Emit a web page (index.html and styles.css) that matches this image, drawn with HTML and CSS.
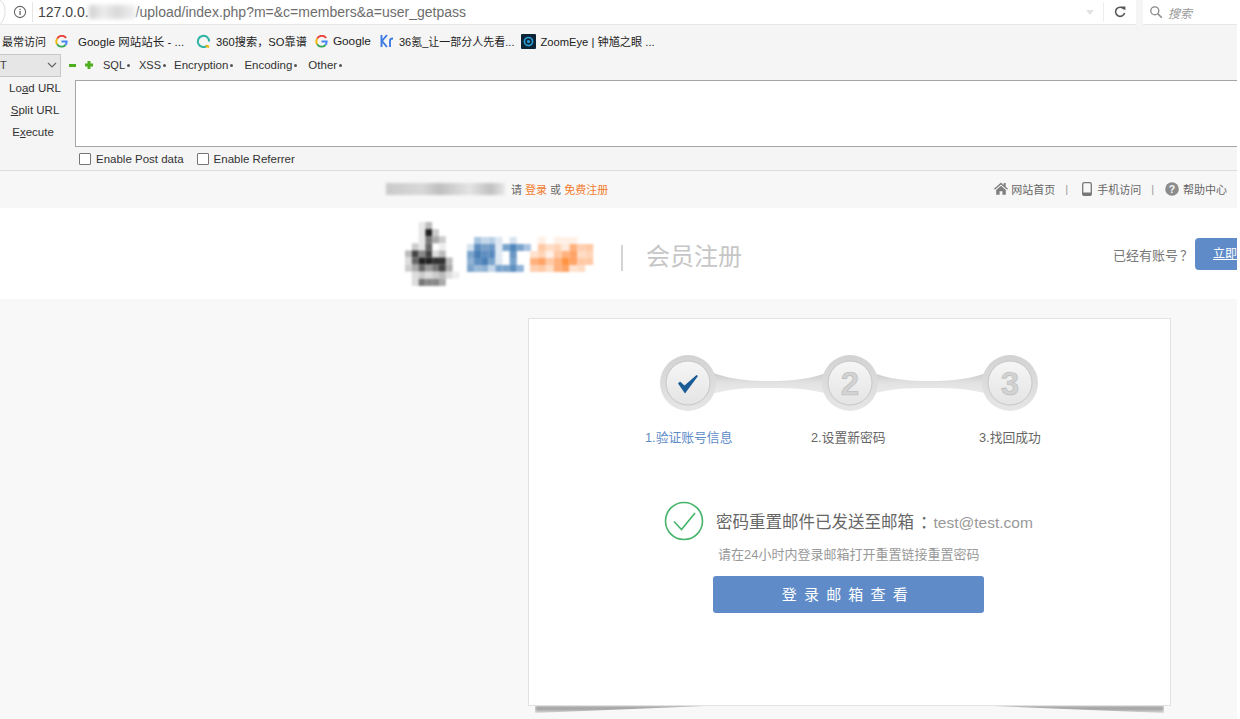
FILE: index.html
```html
<!DOCTYPE html>
<html lang="zh">
<head>
<meta charset="utf-8">
<title>会员注册</title>
<link rel="stylesheet" href="styles.css">
</head>
<body>
<div class="shot">
  <div class="urlbar">
    <div class="url-main">
      <svg class="back-arc" width="6" height="25" viewBox="0 0 6 25"><path d="M0 0Q6 5 5 14Q4 20 0 25" fill="none" stroke="#dedede"/></svg>
      <svg class="info" width="14" height="14" viewBox="0 0 14 14"><circle cx="7" cy="7" r="5.6" fill="none" stroke="#666" stroke-width="1.1"/><rect x="6.4" y="6" width="1.3" height="4" fill="#666"/><rect x="6.4" y="3.8" width="1.3" height="1.3" fill="#666"/></svg>
      <span class="url-sep"></span>
      <span class="url-text"><span class="url-host">127.0.0.</span><span class="url-blur"></span>/upload/index.php?m=&amp;c=members&amp;a=user_getpass</span>
      <span class="url-drop"></span>
      <span class="url-sep2"></span>
      <svg class="reload" width="14" height="14" viewBox="0 0 14 14"><path d="M11 4.2A4.6 4.6 0 1 0 11.6 8" fill="none" stroke="#555" stroke-width="1.5"/><path d="M8 1.5h4.4v4z" fill="#555"/></svg>
    </div>
    <div class="url-search">
      <svg width="14" height="14" viewBox="0 0 14 14"><circle cx="5.8" cy="5.8" r="4" fill="none" stroke="#888" stroke-width="1.3"/><path d="M8.8 8.8l4 4" stroke="#888" stroke-width="1.6"/></svg>
      <em>搜索</em>
    </div>
  </div>

  <div class="bookmarks">
    <span class="bm bm-first">最常访问</span>
    <span class="bm bm-site"><svg width="13" height="13" viewBox="0 0 14 14"><path d="M12 3.2A5.6 5.6 0 0 0 2.3 4" fill="none" stroke="#e8453c" stroke-width="2"/><path d="M2.3 4a5.6 5.6 0 0 0 0 6" fill="none" stroke="#f4b400" stroke-width="2"/><path d="M2.3 10a5.6 5.6 0 0 0 9 .6" fill="none" stroke="#34a853" stroke-width="2"/><path d="M7 7h5.6a5.6 5.6 0 0 1-1.3 3.6" fill="none" stroke="#4285f4" stroke-width="2"/></svg>Google 网站站长 - ...</span>
    <span class="bm bm-so"><svg width="15" height="15" viewBox="0 0 16 16"><path d="M12.2 12.2A6 6 0 1 1 14 8" fill="none" stroke="#2fb3a5" stroke-width="2.2"/><path d="M10.5 12.5l3.500 1.200" stroke="#f4b400" stroke-width="2.4"/></svg>360搜索，SO靠谱</span>
    <span class="bm bm-google"><svg width="13" height="13" viewBox="0 0 14 14"><path d="M12 3.2A5.6 5.6 0 0 0 2.3 4" fill="none" stroke="#e8453c" stroke-width="2"/><path d="M2.3 4a5.6 5.6 0 0 0 0 6" fill="none" stroke="#f4b400" stroke-width="2"/><path d="M2.3 10a5.6 5.6 0 0 0 9 .6" fill="none" stroke="#34a853" stroke-width="2"/><path d="M7 7h5.6a5.6 5.6 0 0 1-1.3 3.6" fill="none" stroke="#4285f4" stroke-width="2"/></svg>Google</span>
    <span class="bm bm-kr"><svg width="14" height="14" viewBox="0 0 14 14"><path d="M1.500 1v12M7 1L2 7l5 6M10 13V6.500q0-2 3-2" fill="none" stroke="#3d7be0" stroke-width="1.900"/></svg>36氪_让一部分人先看...</span>
    <span class="bm bm-ze"><svg width="15" height="15" viewBox="0 0 14 14"><rect width="14" height="14" rx="1" fill="#0c2436"/><circle cx="7" cy="7" r="3.800" fill="none" stroke="#2c9fd8" stroke-width="1.500"/><circle cx="7" cy="7" r="1.500" fill="#2c9fd8"/></svg>ZoomEye | 钟馗之眼 ...</span>
  </div>

  <div class="hackbar">
    <div class="hb-tools">
      <div class="hb-select">T<svg width="10" height="6" viewBox="0 0 10 6"><path d="M1 1l4 4 4-4" fill="none" stroke="#666" stroke-width="1.200"/></svg></div>
      <span class="hb-minus"></span>
      <svg class="hb-plus" width="8" height="8" viewBox="0 0 8 8"><path d="M2.500 0h3v2.500H8v3H5.500V8h-3V5.500H0v-3h2.500z" fill="#4fae20"/></svg>
      <span class="hb-menu hb-sql">SQL</span>
      <span class="hb-menu hb-xss">XSS</span>
      <span class="hb-menu hb-enc">Encryption</span>
      <span class="hb-menu hb-cod">Encoding</span>
      <span class="hb-menu">Other</span>
    </div>
    <div class="hb-body">
      <div class="hb-actions">
        <span>Lo<u>a</u>d URL</span>
        <span><u>S</u>plit URL</span>
        <span class="hb-exec">E<u>x</u>ecute</span>
      </div>
      <div class="hb-area"></div>
    </div>
    <div class="hb-checks">
      <label><i class="box"></i>Enable Post data</label>
      <label><i class="box"></i>Enable Referrer</label>
    </div>
  </div>

  <div class="site-top">
    <div class="login-tip">
      <span class="tip-blur"></span>
      <span>请 <b>登录</b> 或 <b>免费注册</b></span>
    </div>
    <div class="top-links">
      <span class="tl"><svg width="14" height="13" viewBox="0 0 14 13"><path d="M7 .5L0 6.800l.9 1L7 2.400l6.100 5.400.9-1-2.300-2V1h-2v2z" fill="#808080"/><path d="M2.200 8L7 3.800 11.800 8v4.800H8.400V9.200H5.600v3.600H2.200z" fill="#808080"/></svg>网站首页</span>
      <span class="tl-sep tl-sep-a">|</span>
      <span class="tl tl-phone"><svg width="10" height="14" viewBox="0 0 10 14"><rect x=".7" y=".7" width="8.600" height="12.600" rx="1.400" fill="none" stroke="#777" stroke-width="1.300"/><rect x=".7" y="10.500" width="8.600" height="2.800" fill="#777"/></svg>手机访问</span>
      <span class="tl-sep tl-sep-b">|</span>
      <span class="tl tl-help"><svg width="14" height="14" viewBox="0 0 14 14"><circle cx="7" cy="7" r="6.800" fill="#8c8c8c"/><text x="7" y="10.800" text-anchor="middle" font-size="10.500" font-weight="700" font-family="Liberation Sans" fill="#f7f7f7">?</text></svg>帮助中心</span>
    </div>
  </div>

  <header class="site-head">
    <svg class="logo" width="190" height="66" viewBox="0 0 190 66" aria-hidden="true">
      <g transform="scale(6.800 7.100)">
        <rect x="2" y="0" width="1" height="3" fill="#e8e8e8"/><rect x="3" y="0" width="1" height="1" fill="#bbb"/>
        <rect x="3" y="1" width="1" height="1" fill="#222"/><rect x="4" y="1" width="1" height="1" fill="#ccc"/>
        <rect x="3" y="2" width="1" height="1" fill="#777"/><rect x="4" y="2" width="1" height="1" fill="#aaa"/><rect x="5" y="2" width="1" height="1" fill="#ccc"/>
        <rect x="1" y="3" width="1" height="1" fill="#ccc"/><rect x="2" y="3" width="1" height="1" fill="#e5e5e5"/><rect x="3" y="3" width="1" height="1" fill="#666"/><rect x="5" y="3" width="1" height="1" fill="#eee"/>
        <rect x="0" y="4" width="1" height="1" fill="#bbb"/><rect x="1" y="4" width="1" height="1" fill="#444"/><rect x="2" y="4" width="1" height="1" fill="#888"/><rect x="3" y="4" width="1" height="1" fill="#444"/><rect x="4" y="4" width="1" height="1" fill="#ddd"/><rect x="5" y="4" width="1" height="1" fill="#bbb"/>
        <rect x="0" y="5" width="1" height="1" fill="#ddd"/><rect x="1" y="5" width="1" height="1" fill="#666"/><rect x="2" y="5" width="1" height="1" fill="#222"/><rect x="3" y="5" width="1" height="1" fill="#222"/><rect x="4" y="5" width="1" height="1" fill="#333"/><rect x="5" y="5" width="1" height="1" fill="#333"/><rect x="6" y="5" width="1" height="1" fill="#bbb"/>
        <rect x="0" y="6" width="1" height="1" fill="#ccc"/><rect x="1" y="6" width="1" height="1" fill="#aaa"/><rect x="2" y="6" width="1" height="1" fill="#666"/><rect x="3" y="6" width="1" height="1" fill="#999"/><rect x="4" y="6" width="1" height="1" fill="#777"/><rect x="5" y="6" width="1" height="1" fill="#444"/><rect x="6" y="6" width="1" height="1" fill="#aaa"/>
        <rect x="1" y="7" width="1" height="1" fill="#ddd"/><rect x="2" y="7" width="1" height="1" fill="#ccc"/><rect x="3" y="7" width="1" height="1" fill="#ddd"/><rect x="4" y="7" width="1" height="1" fill="#ccc"/><rect x="5" y="7" width="1" height="1" fill="#bbb"/><rect x="6" y="7" width="1" height="1" fill="#ddd"/><rect x="7" y="7" width="1" height="1" fill="#eee"/>
        <rect x="1" y="8" width="1" height="1" fill="#ddd"/><rect x="2" y="8" width="1" height="1" fill="#777"/><rect x="3" y="8" width="1" height="1" fill="#888"/><rect x="4" y="8" width="1" height="1" fill="#888"/><rect x="5" y="8" width="1" height="1" fill="#aaa"/>
      </g>
      <g transform="translate(62 15) scale(7.100 7)">
        <rect x="1" y="0" width="1" height="1" fill="#a8c4e0"/><rect x="2" y="0" width="1" height="1" fill="#c5d8ea"/><rect x="3" y="0" width="1" height="1" fill="#b8cfe6"/><rect x="4" y="0" width="1" height="1" fill="#dce7f2"/><rect x="6" y="0" width="1" height="1" fill="#d5e2f0"/>
        <rect x="0" y="1" width="1" height="1" fill="#d4e2f0"/><rect x="1" y="1" width="1" height="1" fill="#5f8fc0"/><rect x="2" y="1" width="1" height="1" fill="#7aa0c8"/><rect x="3" y="1" width="1" height="1" fill="#6a97c4"/><rect x="4" y="1" width="1" height="1" fill="#e0eaf4"/><rect x="5" y="1" width="1" height="1" fill="#7aa3cc"/><rect x="6" y="1" width="1" height="1" fill="#4f86bb"/><rect x="7" y="1" width="1" height="1" fill="#7aa3cc"/><rect x="8" y="1" width="1" height="1" fill="#a8c4e0"/>
        <rect x="0" y="2" width="1" height="1" fill="#7da5cc"/><rect x="1" y="2" width="1" height="1" fill="#4a80b6"/><rect x="2" y="2" width="1" height="1" fill="#5f8fc0"/><rect x="3" y="2" width="1" height="1" fill="#5a8bbf"/><rect x="4" y="2" width="1" height="1" fill="#e0eaf4"/><rect x="6" y="2" width="1" height="1" fill="#6a97c4"/>
        <rect x="0" y="3" width="1" height="1" fill="#90b2d4"/><rect x="1" y="3" width="1" height="1" fill="#5f8fc0"/><rect x="2" y="3" width="1" height="1" fill="#4a80b6"/><rect x="3" y="3" width="1" height="1" fill="#7aa3cc"/><rect x="4" y="3" width="1" height="1" fill="#dce7f2"/><rect x="6" y="3" width="1" height="1" fill="#7aa3cc"/>
        <rect x="0" y="4" width="1" height="1" fill="#7da5cc"/><rect x="1" y="4" width="1" height="1" fill="#9abad9"/><rect x="2" y="4" width="1" height="1" fill="#90b2d4"/><rect x="3" y="4" width="1" height="1" fill="#c5d8ea"/><rect x="4" y="4" width="1" height="1" fill="#7aa3cc"/><rect x="5" y="4" width="1" height="1" fill="#7aa3cc"/><rect x="6" y="4" width="1" height="1" fill="#5f8fc0"/><rect x="7" y="4" width="1" height="1" fill="#8fb2d6"/>
      </g>
      <g transform="translate(125 15) scale(7.900 7)">
        <rect x="1" y="0" width="1" height="1" fill="#fff0e6"/><rect x="3" y="0" width="3" height="1" fill="#fff0e6"/>
        <rect x="1" y="1" width="1" height="1" fill="#ffc9a5"/><rect x="2" y="1" width="1" height="1" fill="#ffdcc4"/><rect x="3" y="1" width="1" height="1" fill="#ffd4b8"/><rect x="4" y="1" width="1" height="1" fill="#ffeadd"/><rect x="5" y="1" width="1" height="1" fill="#ffb27d"/><rect x="6" y="1" width="1" height="1" fill="#ffcfb0"/><rect x="7" y="1" width="1" height="1" fill="#ffc9a5"/>
        <rect x="0" y="2" width="1" height="1" fill="#ffe2cf"/><rect x="1" y="2" width="1" height="1" fill="#ffd4b8"/><rect x="2" y="2" width="1" height="1" fill="#fff0e6"/><rect x="3" y="2" width="1" height="1" fill="#ffc9a5"/><rect x="4" y="2" width="1" height="1" fill="#ffb27d"/><rect x="5" y="2" width="1" height="1" fill="#ffa366"/><rect x="6" y="2" width="1" height="1" fill="#ffdcc4"/><rect x="7" y="2" width="1" height="1" fill="#ffd4b8"/>
        <rect x="0" y="3" width="1" height="1" fill="#ffb27d"/><rect x="1" y="3" width="1" height="1" fill="#ffa366"/><rect x="2" y="3" width="1" height="1" fill="#ffc9a5"/><rect x="3" y="3" width="1" height="1" fill="#ffb27d"/><rect x="4" y="3" width="1" height="1" fill="#ff9540"/><rect x="5" y="3" width="1" height="1" fill="#ffa366"/><rect x="6" y="3" width="1" height="1" fill="#ffc9a5"/><rect x="7" y="3" width="1" height="1" fill="#ffc9a5"/>
        <rect x="0" y="4" width="1" height="1" fill="#ffcfb0"/><rect x="1" y="4" width="1" height="1" fill="#ffc9a5"/><rect x="2" y="4" width="1" height="1" fill="#ffdcc4"/><rect x="3" y="4" width="1" height="1" fill="#ffb27d"/><rect x="4" y="4" width="1" height="1" fill="#ffa366"/><rect x="5" y="4" width="1" height="1" fill="#ffe2cf"/><rect x="6" y="4" width="1" height="1" fill="#ffdcc4"/>
      </g>
    </svg>
    <span class="head-sep"></span>
    <span class="head-title">会员注册</span>
    <div class="head-login">
      <span>已经有账号<span class="qmark">？</span></span>
      <a class="login-btn">立即</a>
    </div>
  </header>

  <main class="page">
    <section class="card">
      <div class="steps">
        <svg class="step-art" width="380" height="58" viewBox="0 0 380 58">
          <defs>
            <linearGradient id="disc" x1="0" y1="0" x2="0" y2="1"><stop offset="0" stop-color="#f6f6f6"/><stop offset="1" stop-color="#e4e4e4"/></linearGradient>
            <linearGradient id="ring" x1="0" y1="0" x2="0" y2="1"><stop offset="0" stop-color="#d2d2d2"/><stop offset="1" stop-color="#e6e6e6"/></linearGradient>
            <linearGradient id="band" x1="0" y1="0" x2="0" y2="1"><stop offset="0" stop-color="#c4c4c4"/><stop offset=".5" stop-color="#e2e2e2"/><stop offset="1" stop-color="#ececec"/></linearGradient>
          </defs>
          <path d="M45 15C70 25 90 26 109 26S150 25 175 15V41C150 33 130 33 109 33S70 33 45 41Z" fill="url(#band)"/>
          <path d="M205 15C230 25 250 26 269 26S310 25 335 15V41C310 33 290 33 269 33S230 33 205 41Z" fill="url(#band)"/>
          <g fill="url(#ring)">
            <circle cx="28" cy="28" r="28"/>
            <circle cx="190" cy="28" r="28"/>
            <circle cx="350" cy="28" r="28"/>
          </g>
          <g fill="url(#disc)" stroke="#c6c6c6" stroke-width="1">
            <circle cx="28" cy="28" r="22"/>
            <circle cx="190" cy="28" r="22"/>
            <circle cx="350" cy="28" r="22"/>
          </g>
          <path d="M18 28.500l2-2 4.500 4L36.500 20l1.500 1L25 38.500z" fill="#1c5c96"/>
          <text class="step-num" x="190" y="40">2</text>
          <text class="step-num" x="350" y="40">3</text>
        </svg>
        <div class="step-labels">
          <span class="active">1.验证账号信息</span>
          <span>2.设置新密码</span>
          <span>3.找回成功</span>
        </div>
      </div>
      <div class="result">
        <div class="result-line">
          <svg width="40" height="40" viewBox="0 0 40 40"><circle cx="20" cy="20" r="18.500" fill="none" stroke="#45b46a" stroke-width="1.600"/><path d="M10 20.500l7.500 8L31 12" fill="none" stroke="#45b46a" stroke-width="1.600"/></svg>
          <span class="result-main">密码重置邮件已发送至邮箱<span class="colon">：</span><span class="mail">test@test.com</span></span>
        </div>
        <p class="result-sub">请在24小时内登录邮箱打开重置链接重置密码</p>
        <a class="mail-btn">登 录 邮 箱 查 看</a>
      </div>
    </section>
  </main>
</div>
</body>
</html>
```
FILE: styles.css
```css
* { box-sizing: border-box; }
html, body { margin: 0; height: 719px; overflow: hidden; background: #fff; }
body { font-family: "Liberation Sans", "Noto Sans CJK SC", sans-serif; color: #333; }
.shot { width: 1237px; height: 719px; overflow: hidden; display: flex; flex-direction: column; }
svg { flex: none; display: block; }

.urlbar { height: 25px; flex: none; display: flex; background: #f5f5f5; }
.url-main { width: 1136px; background: #fff; border-bottom: 1px solid #e8e8e8; display: flex; align-items: center; }
.back-arc { margin-right: 7px; }
.url-sep { width: 1px; height: 20px; background: #e6e6e6; margin: 0 5px 0 5px; }
.url-text { font-size: 14px; color: #6d6d6d; white-space: nowrap; display: flex; align-items: center; }
.url-host { color: #444; }
.url-blur { display: inline-block; width: 47px; height: 14px; background: linear-gradient(90deg, #cfcfcf, #ececec 30%, #d8d8d8 60%, #f2f2f2); filter: blur(2px); }
.url-drop { margin-left: auto; margin-right: 9px; border: 4px solid transparent; border-top: 5px solid #e2e2e2; border-bottom: 0; }
.url-sep2 { width: 1px; height: 20px; background: #eee; margin-right: 9px; }
.reload { margin-right: 9px; }
.url-search { flex: 1; margin-left: 7px; background: #fff; border-bottom: 1px solid #e8e8e8; display: flex; align-items: center; gap: 5px; padding-left: 6px; font-size: 12px; color: #999; }
.url-search em { font-style: italic; }

.bookmarks { height: 28px; flex: none; background: #f5f5f5; display: flex; align-items: center; padding: 4px 0 0 2px; font-size: 11.500px; color: #222; }
.bm { display: flex; align-items: center; gap: 5px; white-space: nowrap; }
.bm-first { font-size: 11px; margin-right: 9px; }
.bm-site { gap: 10px; margin-right: 12px; }
.bm-so { font-size: 11.200px; margin-right: 8px; }
.bm-google { font-size: 11.800px; margin-right: 9px; }
.bm-kr { font-size: 11px; gap: 5px; margin-right: 7px; }
.bm-ze { font-size: 11.200px; gap: 4px; }

.hackbar { height: 118px; flex: none; background: #f5f5f5; border-bottom: 1px solid #ddd; display: flex; flex-direction: column; }
.hb-tools { height: 27px; flex: none; display: flex; align-items: center; padding-bottom: 3px; font-size: 11.500px; color: #333; }
.hb-select { width: 61px; height: 23px; background: #e6e6e6; border: 1px solid #c8c8c8; border-left: 0; display: flex; align-items: center; justify-content: space-between; padding-right: 3px; font-size: 11px; color: #444; }
.hb-minus { width: 7px; height: 3px; background: #4fae20; margin-left: 8px; }
.hb-plus { margin: 0 10px 0 9px; }
.hb-menu { display: flex; align-items: center; gap: 2px; }
.hb-menu::after { content: ""; width: 3px; height: 3px; background: #555; border-radius: 50%; }
.hb-sql { font-size: 11px; margin-right: 9px; }
.hb-xss { font-size: 11px; margin-right: 8px; }
.hb-enc { margin-right: 11px; }
.hb-cod { margin-right: 11px; }
.hb-body { height: 67px; flex: none; display: flex; }
.hb-actions { width: 75px; flex: none; display: flex; flex-direction: column; align-items: flex-end; gap: 6px; padding: 0 10px 0 0; font-size: 11.500px; color: #333; line-height: 16px; }
.hb-actions span { width: 60px; text-align: center; }
.hb-actions .hb-exec { padding-right: 4px; }
.hb-area { flex: 1; background: #fff; border: 1px solid #a5a5a5; border-right: 0; }
.hb-checks { display: flex; padding: 5px 0 0 79px; gap: 13px; font-size: 11.500px; color: #333; }
.hb-checks label { display: flex; align-items: center; gap: 5px; line-height: 14px; }
.box { display: block; width: 12px; height: 12px; border: 1px solid #767676; background: #fff; border-radius: 1px; }

.site-top { height: 37px; flex: none; background: #f7f7f7; display: flex; align-items: center; padding-bottom: 2px; font-size: 11px; color: #666; }
.login-tip { display: flex; align-items: center; margin-left: 386px; gap: 6px; white-space: nowrap; }
.login-tip b { color: #f47a2b; font-weight: 400; }
.tip-blur { width: 119px; height: 12px; background: linear-gradient(90deg, #c9c9c9, #d8d8d8 30%, #bfbfbf 45%, #e4e4e4 70%, #c0c0c0 88%, #e8e8e8); filter: blur(1.500px); }
.top-links { margin-left: auto; display: flex; align-items: center; margin-right: 10px; gap: 10px; }
.tl { display: flex; align-items: center; gap: 3px; white-space: nowrap; }
.tl-phone { gap: 5px; }
.tl-help { gap: 4px; }
.tl-sep { color: #999; }
.tl-sep-a { margin-right: 4px; }
.tl-sep-b { margin-right: 1px; }

.site-head { height: 91px; flex: none; background: #fff; display: flex; align-items: flex-start; padding: 14px 0 0 405px; position: relative; }
.logo { filter: blur(.8px); }
.head-sep { width: 2px; height: 26px; background: #d4d4d4; margin: 23px 23px 0 26px; }
.head-title { font-size: 24px; line-height: 36px; margin-top: 17px; color: #c6c6c6; white-space: nowrap; }
.head-login { position: absolute; left: 1113px; top: 30px; display: flex; align-items: center; gap: 6px; font-size: 13px; color: #777; white-space: nowrap; }
.qmark { margin-left: 2px; letter-spacing: -4px; }
.login-btn { width: 42px; height: 32px; background: #5f8cc8; color: #fff; border-radius: 4px 0 0 4px; display: block; font-size: 12px; line-height: 32px; padding-left: 18px; text-decoration: underline; white-space: nowrap; }

.page { flex: 1; background: #f8f8f8; padding: 19px 0 0 528px; }
.card { width: 643px; height: 388px; background: #fff; border: 1px solid #e2e2e2; position: relative; }
.card::before, .card::after { content: ""; position: absolute; bottom: -8px; width: 170px; height: 7px; background: linear-gradient(#8a8a8a, #cfcfcf); filter: blur(1.500px); }
.card::before { left: 6px; clip-path: polygon(0 0, 100% 0, 0 100%); }
.card::after { right: 6px; clip-path: polygon(0 0, 100% 0, 100% 100%); }

.steps { margin-top: 36px; display: flex; flex-direction: column; align-items: flex-start; }
.step-art { margin-left: 131px; }
.step-num { font: 700 33px "Liberation Sans", sans-serif; fill: #d2d2d2; stroke: #bbb; stroke-width: .6px; text-anchor: middle; }
.step-labels { display: flex; margin-top: 17px; margin-left: 116px; font-size: 12.800px; color: #666; white-space: nowrap; line-height: 16px; }
.step-labels span { display: block; }
.step-labels .active { color: #5f8cc8; width: 166px; }
.step-labels span:nth-child(2) { width: 168px; }

.result { margin-top: 55px; margin-left: 135px; display: flex; flex-direction: column; align-items: flex-start; }
.result-line { display: flex; align-items: center; gap: 12px; }
.result-main { font-size: 16.500px; color: #666; white-space: nowrap; }
.colon { margin-left: 6px; letter-spacing: -3px; }
.mail { color: #999; font-size: 15.500px; }
.result-sub { margin: 6px 0 0 54px; font-size: 13px; line-height: 16px; color: #999; white-space: nowrap; }
.mail-btn { display: block; margin: 13px 0 0 49px; width: 271px; height: 37px; padding-right: 6px; background: #5f8cc8; color: #fff; border-radius: 3px; text-align: center; line-height: 37px; font-size: 15px; letter-spacing: 1.500px; }
```
